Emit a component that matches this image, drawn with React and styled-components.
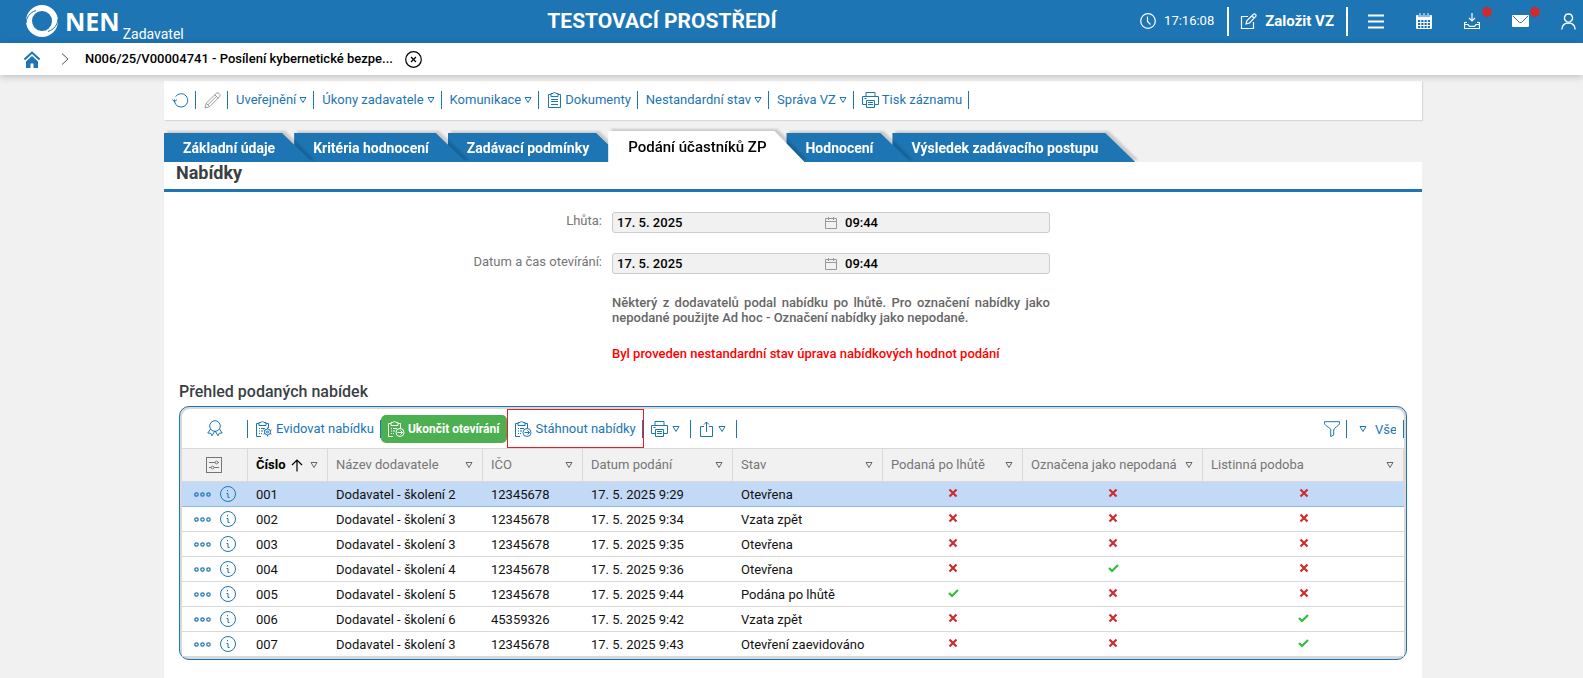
import React from "react";
import styled, { createGlobalStyle, css } from "styled-components";

const blue = "#1d75b4";
const line = "#d9d9d9";

const GlobalStyle = createGlobalStyle`
  *, *::before, *::after { box-sizing: border-box; }
  body {
    margin: 0;
    background: #f1f1f1;
    color: #000;
    font: 13px/16px Roboto, "Liberation Sans", sans-serif;
  }
  button, input, select { font: inherit; color: inherit; }
  button { margin: 0; padding: 0; border: 0; background: none; cursor: pointer; }
  svg { display: block; flex: none; }
`;

/* ---------- icons ---------- */

const Icon = ({ w = 17, h = 17, width = 1, children, ...rest }) => (
  <svg
    width={w}
    height={h}
    viewBox={`0 0 ${w} ${h}`}
    fill="none"
    stroke="currentColor"
    strokeWidth={width}
    aria-hidden="true"
    {...rest}
  >
    {children}
  </svg>
);

const Logo = () => (
  <svg width="32" height="32" viewBox="0 0 32 32" aria-hidden="true">
    <path
      fill="#fff"
      fillRule="evenodd"
      d="M16 0a16 16 0 1 0 0 32 16 16 0 0 0 0-32zM16.500 6a10 10 0 1 1-1 20 10 10 0 0 1 1-20z"
    />
    <path d="M0 18C.500 12 4 7.500 10 5.500" fill="none" stroke={blue} strokeWidth="1" />
    <path d="M32 14c-.500 6-4 10.500-10 12.500" fill="none" stroke={blue} strokeWidth="1" />
  </svg>
);
const Triangle = () => (
  <Icon w={8} h={8}><path d="M1 1.5h6L4 6.5z" /></Icon>
);
const Clock = () => (
  <Icon w={16} h={16} width={1.2}><circle cx="8" cy="8" r="7.3" /><path d="M7.5 3.5v5l3 3" /></Icon>
);
const Edit = () => (
  <Icon width={1.2}><path d="M8 3.5H1.500v12h12V9" /><path d="M6 11l1-3.500L13.500 1.200c1.500-1 3.200.8 2.200 2.200L9.500 10z M12 3l2 2" /></Icon>
);
const Burger = () => (
  <Icon w={16} h={15} width={2}><path d="M0 1.500h16M0 7.500h16M0 13.500h16" /></Icon>
);
const CalendarFull = () => (
  <Icon w={16} h={16}>
    <rect x="0" y="2" width="16" height="14" rx="1" fill="currentColor" stroke="none" />
    <path d="M4 0v4M8 0v4M12 0v4" stroke={blue} strokeWidth="3" />
    <path d="M4 0v4M8 0v4M12 0v4" />
    <path d="M2 8h12M2 11h12M2 14h12" stroke={blue} strokeWidth="2" strokeDasharray="2.250 1" />
  </Icon>
);
const Download = () => (
  <Icon w={16} h={16} width={1.2}>
    <path d="M8 0v8M5 5l3 3 3-3" />
    <path d="M3 9.500H.600v6h14.800v-6H13M.600 11.500H4l1.500 1.800h5L12 11.500h3.400" />
  </Icon>
);
const Mail = () => (
  <Icon w={17} h={12}>
    <rect width="17" height="12" rx="1" fill="currentColor" stroke="none" />
    <path d="M1 1l6.500 6.500h2L16 1" stroke={blue} />
  </Icon>
);
const User = () => (
  <Icon w={15} h={17} width={1.3}>
    <path d="M7.500 1a4 4 0 0 1 2 7.500c-1.500.9-2.800.9-4 0A4 4 0 0 1 7.500 1z" />
    <path d="M.800 16.500c.3-4 2.500-6.500 6.700-6.500s6.400 2.500 6.700 6.500" />
  </Icon>
);
const Home = () => (
  <Icon w={16} h={17}>
    <path d="M.500 8.500L8 1.500l7.500 7" strokeWidth="2" />
    <path d="M2 10.500l6-5.500 6 5.500V17H9.500v-4.500h-3V17H2z" fill="currentColor" stroke="none" />
  </Icon>
);
const Chevron = () => (
  <Icon w={8} h={12}><path d="M1 .500L7 6l-6 5.500" stroke="#555" /></Icon>
);
const CloseCircle = () => (
  <Icon width={1.2}><circle cx="8.500" cy="8.500" r="7.800" /><path d="M6 6l5 5M11 6l-5 5" /></Icon>
);
const Refresh = () => (
  <Icon w={17} h={15}>
    <path d="M2.500 8.500A6.700 6.700 0 1 0 3.500 3.700" />
    <path d="M2.500 9V6.500M.300 6.500l2.200 2.300L5 6.500" />
  </Icon>
);
const Pencil = () => (
  <Icon>
    <path d="M1 16l1.200-4.800L12.500 1.200c1.500-1.400 4.600 1.500 3.200 3.200L5.600 14.700zM10.800 2.800l3.300 3.300M2.200 11.200l3.400 3.500M12.400 4.400L3.800 13" />
  </Icon>
);
const Clipboard = () => (
  <Icon w={15} h={16}>
    <path d="M4 2.500H1.500v13h12v-13H11M4 1.500h2C6 .300 9 .300 9 1.500h2v3H4zM4 7.500h7M4 9.500h7M4 12.500h7" />
  </Icon>
);
const Printer = () => (
  <Icon w={17} h={16}>
    <path d="M4 4.500V.500h9v4M4 12.500H.500v-8h16v8H13M4.500 8.500h8v7h-8zM6 10.500h5M6 12.500h5M2.500 6.500h2" />
  </Icon>
);
const CalendarSmall = () => (
  <Icon w={12} h={12}><path d="M.500 1.500h11v10H.500zM.500 4.500h11M3.500 0v3M8.500 0v3" /></Icon>
);
const Ribbon = () => (
  <Icon w={16} h={17}>
    <circle cx="8" cy="6" r="5.300" />
    <path d="M3.500 9L.800 13l3 .3 1.200 2.500L7.800 11M12.500 9l2.700 4-3 .3-1.200 2.500L8.200 11" />
  </Icon>
);
const ClipBase = () => (
  <path d="M5 15.500H.500v-13H3M10 2.500h2.500V7M3 4.500v-3h2C5 .300 8 .300 8 1.500h2v3zM3 7.500h1M5 7.500h4M3 10h1M5 10h2M3 12.500h1M5 12.500h1" />
);
const ClipGear = () => (
  <Icon w={17} h={16}>
    <ClipBase />
    <circle cx="11.500" cy="11" r="3" />
    <circle cx="11.500" cy="11" r="1" />
    <path d="M11.500 6.500V8M11.500 14v1.500M7.500 8.800l1.500.9M14 12.300l1.500.9M7.500 13.200l1.500-.9M14 9.700l1.500-.9" />
  </Icon>
);
const ClipArrow = () => (
  <Icon w={17} h={16}>
    <ClipBase />
    <circle cx="12" cy="11.500" r="4" />
    <path d="M9.500 11.500h5M12.500 9.500l2 2-2 2" />
  </Icon>
);
const Export = () => (
  <Icon w={15} h={16}>
    <path d="M5 5.500H1.500v10h12v-10H10M7.500 11V1M5 3.500L7.500 1 10 3.500" />
  </Icon>
);
const Funnel = () => (
  <Icon w={16} h={16}>
    <path d="M.500.700h15v2C15 5 9.700 6.500 9.700 9v5l-3 1.500V9C6.700 6.500 1 5 .500 2.700z" />
  </Icon>
);
const Settings = () => (
  <Icon w={16} h={16}>
    <rect x=".5" y=".5" width="15" height="15" />
    <circle cx="10.500" cy="5.500" r="1.400" /><circle cx="6.500" cy="10.500" r="1.400" />
    <path d="M3 5.500h6M12 5.500h1M3 10.500h2M8 10.500h5" />
  </Icon>
);
const SortUp = () => (
  <Icon w={12} h={13} width={1.2}><path d="M6 12.500V1M1 6l5-5 5 5" /></Icon>
);
const Dots = () => (
  <Icon w={17} h={5} width={1.2}>
    <circle cx="2.500" cy="2.500" r="1.700" /><circle cx="8.500" cy="2.500" r="1.700" /><circle cx="14.500" cy="2.500" r="1.700" />
  </Icon>
);
const Info = () => (
  <Icon w={16} h={16}>
    <circle cx="8" cy="8" r="7.500" />
    <path d="M7.500 4v1.300M6.500 7.500h1.500v4h1.500" />
  </Icon>
);
const Cross = () => (
  <Icon w={10} h={10} width={2.2} stroke="#cb2c30" role="img" aria-label="Ne" aria-hidden={undefined}>
    <path d="M1.500 1.500l7 7M8.500 1.500l-7 7" />
  </Icon>
);
const Tick = () => (
  <Icon w={11} h={10} width={2.2} stroke="#35bb3a" role="img" aria-label="Ano" aria-hidden={undefined}>
    <path d="M1 5l3 3 6-6" />
  </Icon>
);

/* ---------- page head ---------- */

const Page = styled.div`
  display: flex;
  flex-direction: column;
  min-height: 100vh;
`;
const TopBar = styled.header`
  display: flex;
  align-items: center;
  justify-content: space-between;
  height: 43px;
  padding: 0 7px 1px 26px;
  background: ${blue};
  color: #fff;
`;
const Brand = styled.a`
  display: flex;
  align-items: center;
  gap: 7px;
  height: 42px;
  color: inherit;
  text-decoration: none;
`;
const BrandName = styled.span`
  font: 700 25px/30px "Open Sans", "Noto Sans", sans-serif;
`;
const BrandRole = styled.span`
  align-self: flex-end;
  margin-left: -4px;
  font-size: 14px;
`;
const EnvTitle = styled.strong`
  font-size: 21px;
  line-height: 24px;
  font-weight: 700;
`;
const TopTools = styled.div`
  display: flex;
  align-items: center;
  justify-content: flex-end;
`;
const Time = styled.span`
  display: flex;
  align-items: center;
  gap: 8px;
  padding-right: 13px;
`;
const CreateButton = styled.button`
  display: flex;
  align-items: center;
  gap: 8px;
  height: 29px;
  padding: 0 12px 0 11px;
  border: solid #fff;
  border-width: 0 2px;
  font-size: 15px;
  font-weight: 700;
`;
const TopIcons = styled.nav`
  display: flex;
  align-items: center;
  gap: 32px;
  padding-left: 20px;
`;
const TopIcon = styled.button`
  position: relative;
  ${(p) => p.$alert && css`
    &::after {
      content: "";
      position: absolute;
      left: 18px;
      bottom: calc(50% + 4px);
      width: 10px;
      height: 10px;
      border-radius: 5px;
      background: #cb2c30;
    }
  `}
`;
const Crumbs = styled.nav`
  position: relative;
  display: flex;
  align-items: center;
  height: 32px;
  padding: 0 24px;
  background: #fff;
  box-shadow: 0 2px 7px rgba(0, 0, 0, 0.2);
`;
const HomeLink = styled.a`
  margin-right: 21px;
  color: ${blue};
`;
const Crumb = styled.a`
  margin: 0 12px 0 16px;
  color: #000;
  font-weight: 500;
  text-decoration: none;
`;

/* ---------- main column ---------- */

const Main = styled.main`
  display: flex;
  flex: 1;
  flex-direction: column;
  width: 100%;
  max-width: 1261px;
  margin: 0 auto;
  padding: 6px 0 0 3px;
`;
const RecordBar = styled.div`
  display: flex;
  align-items: flex-start;
  height: 39px;
  padding: 10px 0 0;
  background: #fff;
  box-shadow: 1px 1px 1px rgba(0, 0, 0, 0.1);
  color: ${blue};
`;
const BarItem = styled.button`
  position: relative;
  display: flex;
  align-items: center;
  gap: 3px;
  height: 18px;
  padding: 0 6px 0 8px;
  border-right: 1px solid ${blue};
  white-space: nowrap;
  color: ${(p) => (p.disabled ? "#999" : "inherit")};
`;

const Tabs = styled.div`
  display: flex;
  align-items: flex-end;
  height: 31px;
  margin-top: 11px;
`;
const Tab = styled.button`
  position: relative;
  z-index: ${(p) => (p.$active ? 9 : p.$layer)};
  height: ${(p) => (p.$active ? 31 : 29)}px;
  padding: 0 ${(p) => (p.$active ? 20 : 19)}px;
  color: ${(p) => (p.$active ? "#000" : "#fff")};
  font-size: ${(p) => (p.$active ? 15 : 14)}px;
  font-weight: ${(p) => (p.$active ? 500 : 700)};
  white-space: nowrap;
  filter: drop-shadow(3px -2px 1px rgba(0, 0, 0, 0.16));

  &::before {
    content: "";
    position: absolute;
    z-index: -1;
    inset: 0 -18px 0 0;
    background: ${(p) => (p.$active ? "#fff" : blue)};
    clip-path: polygon(0 0, calc(100% - 30px) 0, 100% 100%, 0 100%);
  }
`;
const Panel = styled.section`
  position: relative;
  z-index: 10;
  flex: 1;
  padding-bottom: 18px;
  background: #fff;
`;
const PanelTitle = styled.h1`
  height: 30px;
  margin: 0;
  padding: 0 12px;
  border-bottom: 3px solid ${blue};
  color: #3b3f44;
  font-size: 18px;
  line-height: 21px;
  font-weight: 700;
`;

/* ---------- form ---------- */

const Form = styled.div`
  display: grid;
  grid-template-columns: 438px 438px;
  column-gap: 10px;
  row-gap: 20px;
  margin-top: 20px;
`;
const Label = styled.label`
  height: 18px;
  padding-top: 1px;
  color: #757575;
  text-align: right;
`;
const DateField = styled.div`
  display: flex;
  align-items: center;
  height: 21px;
  border: 1px solid #ccc;
  border-radius: 3px;
  background: #f1f1f1;
  svg { color: #999; }
`;
const DateInput = styled.input`
  width: ${(p) => (p.$time ? "200px" : "212px")};
  height: 19px;
  margin: 0;
  padding: 0 ${(p) => (p.$time ? 8 : 4)}px;
  border: 0;
  outline: 0;
  background: transparent;
  font-weight: 500;
`;
const Note = styled.p`
  grid-column: 2;
  margin: 1px 0 0;
  color: ${(p) => (p.$alert ? "#f00" : "#666")};
  font-weight: 500;
  line-height: 15px;
  text-align: justify;
`;

/* ---------- grid ---------- */

const GridTitle = styled.h2`
  margin: 21px 15px 4px;
  color: #3b3f44;
  font-size: 16px;
  line-height: 20px;
  font-weight: 500;
`;
const GridBox = styled.div`
  margin: 0 15px;
  border: 1px solid ${blue};
  border-radius: 10px;
  background: ${line};
  padding: 2px;
  overflow: hidden;
`;
const GridBar = styled.div`
  display: flex;
  align-items: center;
  height: 40px;
  border-bottom: 1px solid ${line};
  border-radius: 8px 8px 0 0;
  background: #fff;
  color: ${blue};
`;
const IconCell = styled(BarItem)`
  justify-content: center;
  width: 66px;
  padding: 0 8px;
`;
const IconMenu = styled(BarItem)`
  gap: 4px;
  padding: 0 10px 0 8px;
`;
const PrimaryButton = styled.button`
  display: flex;
  align-items: center;
  gap: 3px;
  height: 28px;
  padding: 0 8px 0 7px;
  border-radius: 5px;
  background: #4caf50;
  color: #fff;
  font-size: 12px;
  font-weight: 700;
  white-space: nowrap;
`;
const MarkedItem = styled(BarItem)`
  &::after {
    content: "";
    position: absolute;
    inset: -11px -2px -10px 0;
    border: 1px solid #ed1c24;
  }
`;
const BarEnd = styled.div`
  display: flex;
  align-items: center;
  margin-left: auto;
`;
const ViewPicker = styled.label`
  display: flex;
  align-items: center;
  gap: 8px;
  height: 18px;
  padding: 0 7px 0 12px;
  border-right: 1px solid ${blue};
`;
const ViewSelect = styled.select`
  appearance: none;
  width: 21px;
  margin: 3px 0 0;
  padding: 0;
  border: 0;
  background: none;
`;
const Table = styled.table`
  width: 100%;
  border-collapse: separate;
  border-spacing: 0;
  table-layout: fixed;
  background: #fff;
`;
const HeadCell = styled.th`
  width: ${(p) => (p.$width ? `${p.$width}px` : "auto")};
  height: 33px;
  padding: 0 9px 0 8px;
  border: solid ${line};
  border-width: 0 1px 1px 0;
  background: #f1f1f1;
  color: ${(p) => (p.$sorted ? "#000" : "#757575")};
  font-weight: ${(p) => (p.$sorted ? 700 : 400)};
  text-align: left;
  white-space: nowrap;
`;
const HeadRow = styled.div`
  display: flex;
  align-items: center;
  justify-content: ${(p) => (p.$center ? "center" : "flex-start")};
  gap: 5px;
  button { margin-left: auto; color: #666; }
`;
const Row = styled.tr`
  background: ${(p) => (p.$selected ? "#c3daf6" : "#fff")};
  td { border-bottom: 1px solid ${(p) => (p.$selected ? "#8fb8e8" : line)}; }
`;
const Cell = styled.td`
  height: 25px;
  padding: 1px 8px 0;
  color: #111;
  white-space: nowrap;
`;
const ToolCell = styled(Cell)`
  padding: 0 12px;
`;
const FlagCell = styled(Cell)`
  padding: 0 0 2px;
  svg { margin: 0 auto; }
`;
const RowTools = styled.div`
  display: flex;
  align-items: center;
  gap: 9px;
  color: ${blue};
`;

const columns = [
  { label: "Číslo", width: 80, sorted: true },
  { label: "Název dodavatele", width: 155 },
  { label: "IČO", width: 100 },
  { label: "Datum podání", width: 150 },
  { label: "Stav", width: 150 },
  { label: "Podaná po lhůtě", width: 140 },
  { label: "Označena jako nepodaná", width: 180 },
  { label: "Listinná podoba" },
];

const rows = [
  ["001", "Dodavatel - školení 2", "12345678", "17. 5. 2025 9:29", "Otevřena", false, false, false],
  ["002", "Dodavatel - školení 3", "12345678", "17. 5. 2025 9:34", "Vzata zpět", false, false, false],
  ["003", "Dodavatel - školení 3", "12345678", "17. 5. 2025 9:35", "Otevřena", false, false, false],
  ["004", "Dodavatel - školení 4", "12345678", "17. 5. 2025 9:36", "Otevřena", false, true, false],
  ["005", "Dodavatel - školení 5", "12345678", "17. 5. 2025 9:44", "Podána po lhůtě", true, false, false],
  ["006", "Dodavatel - školení 6", "45359326", "17. 5. 2025 9:42", "Vzata zpět", false, false, true],
  ["007", "Dodavatel - školení 3", "12345678", "17. 5. 2025 9:43", "Otevření zaevidováno", false, false, true],
];

const tabs = [
  "Základní údaje",
  "Kritéria hodnocení",
  "Zadávací podmínky",
  "Podání účastníků ZP",
  "Hodnocení",
  "Výsledek zadávacího postupu",
];

const recordActions = [
  { icon: Refresh, name: "Obnovit" },
  { icon: Pencil, name: "Upravit", disabled: true },
  { label: "Uveřejnění", menu: true },
  { label: "Úkony zadavatele", menu: true },
  { label: "Komunikace", menu: true },
  { icon: Clipboard, label: "Dokumenty" },
  { label: "Nestandardní stav", menu: true },
  { label: "Správa VZ", menu: true },
  { icon: Printer, label: "Tisk záznamu" },
];

const DateRow = ({ id, label }) => (
  <>
    <Label htmlFor={id}>{label}</Label>
    <DateField>
      <DateInput id={id} defaultValue="17. 5. 2025" readOnly />
      <CalendarSmall />
      <DateInput $time aria-label={`${label} čas`} defaultValue="09:44" readOnly />
    </DateField>
  </>
);

export default function App() {
  return (
    <Page>
      <GlobalStyle />
      <TopBar>
        <Brand href="#">
          <Logo />
          <BrandName>NEN</BrandName>
          <BrandRole>Zadavatel</BrandRole>
        </Brand>
        <EnvTitle>TESTOVACÍ PROSTŘEDÍ</EnvTitle>
        <TopTools>
          <Time><Clock />17:16:08</Time>
          <CreateButton><Edit />Založit VZ</CreateButton>
          <TopIcons>
            <TopIcon aria-label="Menu"><Burger /></TopIcon>
            <TopIcon aria-label="Kalendář"><CalendarFull /></TopIcon>
            <TopIcon aria-label="Stažené soubory" $alert><Download /></TopIcon>
            <TopIcon aria-label="Zprávy" $alert><Mail /></TopIcon>
            <TopIcon aria-label="Uživatel"><User /></TopIcon>
          </TopIcons>
        </TopTools>
      </TopBar>
      <Crumbs>
        <HomeLink href="#" aria-label="Domů"><Home /></HomeLink>
        <Chevron />
        <Crumb href="#">N006/25/V00004741 - Posílení kybernetické bezpe...</Crumb>
        <button aria-label="Zavřít"><CloseCircle /></button>
      </Crumbs>

      <Main>
        <RecordBar>
          {recordActions.map(({ icon: Glyph, label, name, menu, disabled }) => (
            <BarItem key={label || name} aria-label={name} disabled={disabled}>
              {Glyph && <Glyph />}
              {label}
              {menu && <Triangle />}
            </BarItem>
          ))}
        </RecordBar>

        <Tabs role="tablist">
          {tabs.map((label, i) => (
            <Tab key={label} role="tab" aria-selected={i === 3} $active={i === 3} $layer={tabs.length - i}>
              {label}
            </Tab>
          ))}
        </Tabs>

        <Panel>
          <PanelTitle>Nabídky</PanelTitle>
          <Form>
            <DateRow id="deadline" label="Lhůta:" />
            <DateRow id="opening" label="Datum a čas otevírání:" />
            <Note>
              Některý z dodavatelů podal nabídku po lhůtě. Pro označení nabídky jako nepodané použijte Ad hoc -
              Označení nabídky jako nepodané.
            </Note>
            <Note $alert>Byl proveden nestandardní stav úprava nabídkových hodnot podání</Note>
          </Form>

          <GridTitle>Přehled podaných nabídek</GridTitle>
          <GridBox>
            <GridBar>
              <IconCell aria-label="Hodnocení nabídek"><Ribbon /></IconCell>
              <BarItem><ClipGear />Evidovat nabídku</BarItem>
              <PrimaryButton><ClipArrow />Ukončit otevírání</PrimaryButton>
              <MarkedItem><ClipArrow />Stáhnout nabídky</MarkedItem>
              <IconMenu aria-label="Tisk"><Printer /><Triangle /></IconMenu>
              <IconMenu aria-label="Export"><Export /><Triangle /></IconMenu>
              <BarEnd>
                <BarItem aria-label="Filtr"><Funnel /></BarItem>
                <ViewPicker>
                  <Triangle />
                  <ViewSelect aria-label="Pohled"><option>Vše</option></ViewSelect>
                </ViewPicker>
              </BarEnd>
            </GridBar>
            <Table>
              <thead>
                <tr>
                  <HeadCell $width={66}>
                    <HeadRow $center><Settings /></HeadRow>
                  </HeadCell>
                  {columns.map(({ label, width, sorted }) => (
                    <HeadCell key={label} $width={width} $sorted={sorted}>
                      <HeadRow>
                        {label}
                        {sorted && <SortUp />}
                        <button aria-label={`Filtr ${label}`}><Triangle /></button>
                      </HeadRow>
                    </HeadCell>
                  ))}
                </tr>
              </thead>
              <tbody>
                {rows.map((row, i) => (
                  <Row key={row[0]} $selected={i === 0}>
                    <ToolCell>
                      <RowTools>
                        <button aria-label="Další akce"><Dots /></button>
                        <button aria-label="Detail"><Info /></button>
                      </RowTools>
                    </ToolCell>
                    {row.map((value, c) =>
                      typeof value === "boolean" ? (
                        <FlagCell key={c}>{value ? <Tick /> : <Cross />}</FlagCell>
                      ) : (
                        <Cell key={c}>{value}</Cell>
                      )
                    )}
                  </Row>
                ))}
              </tbody>
            </Table>
          </GridBox>
        </Panel>
      </Main>
    </Page>
  );
}
